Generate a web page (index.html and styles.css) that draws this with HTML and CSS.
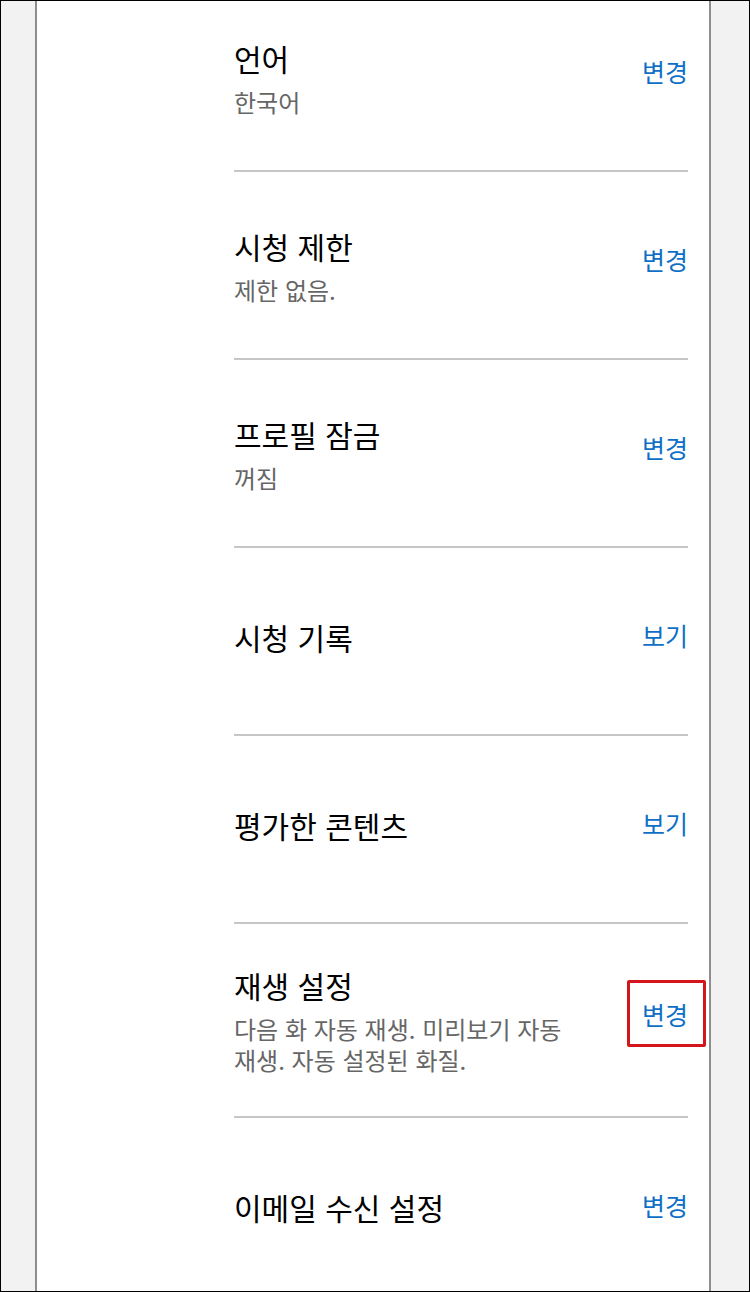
FILE: index.html
```html
<!DOCTYPE html>
<html lang="ko">
<head>
  <meta charset="utf-8">
  <meta name="viewport" content="width=device-width, initial-scale=1">
  <title>계정 설정</title>
  <link rel="stylesheet" href="styles.css">
</head>
<body>
  <div class="frame">
    <div class="panel">
      <div class="settings">
        <div class="row">
          <div class="info">
            <div class="title">언어</div>
            <div class="desc">한국어</div>
          </div>
          <a class="action" href="#">변경</a>
        </div>
        <div class="row">
          <div class="info">
            <div class="title">시청 제한</div>
            <div class="desc">제한 없음.</div>
          </div>
          <a class="action" href="#">변경</a>
        </div>
        <div class="row">
          <div class="info">
            <div class="title">프로필 잠금</div>
            <div class="desc">꺼짐</div>
          </div>
          <a class="action" href="#">변경</a>
        </div>
        <div class="row">
          <div class="info">
            <div class="title">시청 기록</div>
          </div>
          <a class="action" href="#">보기</a>
        </div>
        <div class="row">
          <div class="info">
            <div class="title">평가한 콘텐츠</div>
          </div>
          <a class="action" href="#">보기</a>
        </div>
        <div class="row">
          <div class="info">
            <div class="title">재생 설정</div>
            <div class="desc">다음 화 자동 재생. 미리보기 자동 재생. 자동 설정된 화질.</div>
          </div>
          <a class="action marked" href="#">변경</a>
        </div>
        <div class="row">
          <div class="info">
            <div class="title">이메일 수신 설정</div>
          </div>
          <a class="action" href="#">변경</a>
        </div>
      </div>
    </div>
  </div>
</body>
</html>
```

FILE: styles.css
```css
:root {
  --text-primary: #000;
  --text-secondary: #666;
  --link: #0f6fc6;
  --divider: #c6c6c6;
  --side: #f2f2f2;
  --marker: #d4161c;
}
*, *::before, *::after {
  box-sizing: border-box;
  margin: 0;
  padding: 0;
}
html, body {
  width: 750px;
  height: 1292px;
  overflow: hidden;
  background: #fff;
  font-family: "Noto Sans CJK KR", "Noto Sans", sans-serif;
}
.frame {
  height: 1292px;
  border: 1px solid #000;
  background: var(--side);
  padding: 0 38px 0 34px;
  overflow: hidden;
}
.panel {
  display: flow-root;
  height: 100%;
  background: #fff;
  border-left: 2px solid #8e8e8e;
  border-right: 2px solid #8e8e8e;
  padding: 0 21px 0 197px;
}
.settings {
  margin-top: -17px;
}
.row {
  display: flex;
  align-items: center;
  justify-content: space-between;
  min-height: 188px;
  padding: 41px 0;
  border-bottom: 2px solid var(--divider);
}
.info {
  flex: 1;
  min-width: 0;
  padding-right: 40px;
}
.title {
  font-size: 30px;
  line-height: 40px;
  color: var(--text-primary);
  margin-bottom: 8px;
}
.desc {
  font-size: 24px;
  line-height: 31px;
  color: var(--text-secondary);
  word-break: keep-all;
}
.action {
  position: relative;
  font-size: 25px;
  line-height: 32px;
  color: var(--link);
  text-decoration: none;
  margin-bottom: 13px;
}
/* 강조 표시 */
.marked::after {
  content: "";
  position: absolute;
  left: -15px;
  right: -18px;
  top: -18px;
  bottom: -17px;
  border: 3px solid var(--marker);
  border-radius: 2px;
}
```
